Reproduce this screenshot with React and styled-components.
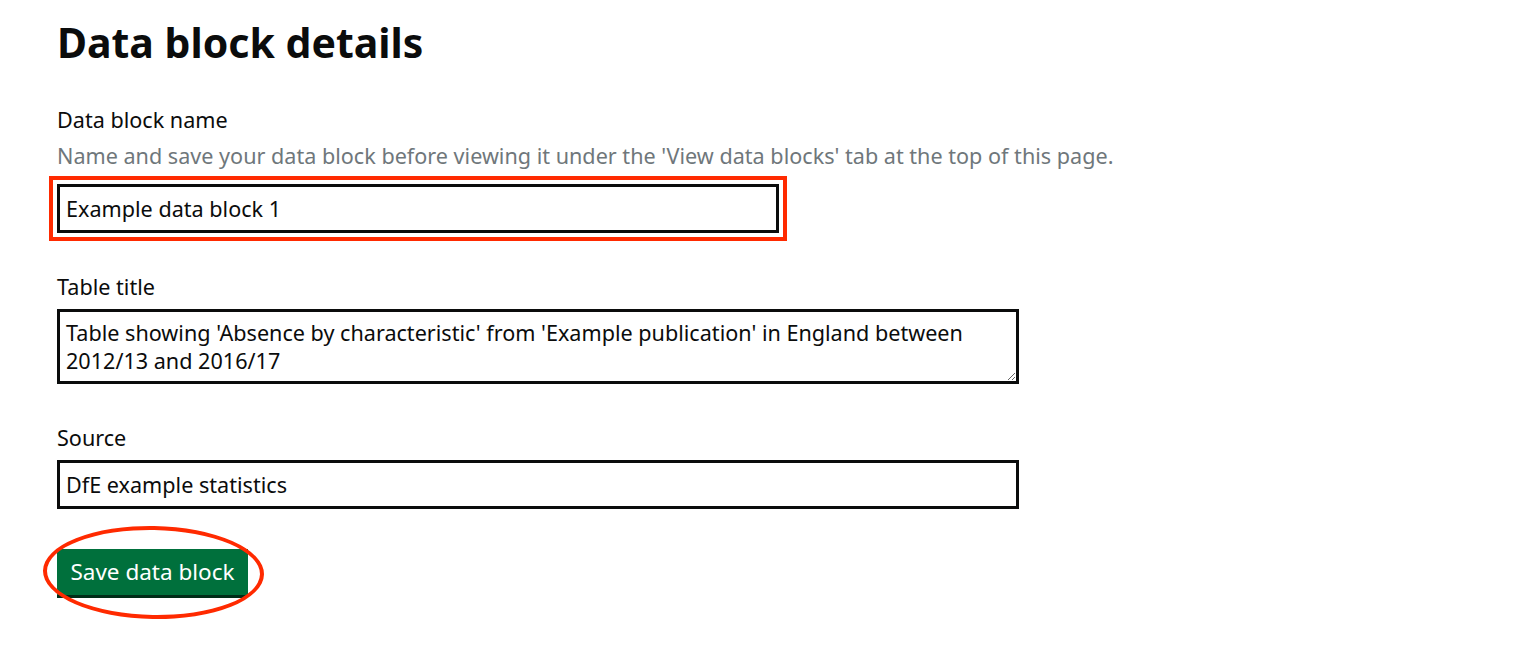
import React from "react";
import styled, { createGlobalStyle } from "styled-components";

const GlobalStyle = createGlobalStyle`
   * {
      box-sizing: border-box;
   }
   body {
      margin: 0;
      background: #ffffff;
      font-family: "Noto Sans", "Liberation Sans", sans-serif;
      color: #0b0c0c;
   }
`;

export default function App() {
   return (
      <>
         <GlobalStyle />
         <Page>
            <Heading>Data block details</Heading>

            <FormGroup>
               <Label htmlFor="name">Data block name</Label>
               <Hint>
                  Name and save your data block before viewing it under the 'View data blocks' tab at
                  the top of this page.
               </Hint>
               <Highlight>
                  <Input id="name" width="722px" defaultValue="Example data block 1" />
               </Highlight>
            </FormGroup>

            <FormGroup>
               <Label htmlFor="title">Table title</Label>
               <TextArea
                  id="title"
                  rows={2}
                  defaultValue="Table showing 'Absence by characteristic' from 'Example publication' in England between 2012/13 and 2016/17"
               />
            </FormGroup>

            <FormGroup>
               <Label htmlFor="source">Source</Label>
               <Input id="source" width="962px" defaultValue="DfE example statistics" />
            </FormGroup>

            <Circled>
               <Button type="button">Save data block</Button>
            </Circled>
         </Page>
      </>
   );
}

const Page = styled.main`
   min-height: 650px;
   padding: 18px 0 60px 57px;
`;

const Heading = styled.h1`
   margin: 0 0 40px;
   font-size: 41px;
   line-height: 48px;
   font-weight: 700;
`;

const FormGroup = styled.div`
   margin-bottom: 40px;
`;

const Label = styled.label`
   display: block;
   margin-bottom: 8px;
   font-size: 21.6px;
   line-height: 28px;
`;

const Hint = styled.div`
   margin-bottom: 14px;
   font-size: 21.6px;
   line-height: 28px;
   color: #6f777b;
`;

const Highlight = styled.div`
   display: inline-block;
   outline: 4.5px solid #ff2a00;
   outline-offset: 4px;
`;

const Input = styled.input`
   display: block;
   width: ${(p) => p.width};
   height: 49px;
   padding: 6px;
   border: 3px solid #0b0c0c;
   border-radius: 0;
   font-family: inherit;
   font-size: 21.6px;
   line-height: 28px;
   color: #0b0c0c;
   outline: none;
`;

const TextArea = styled.textarea`
   display: block;
   width: 962px;
   height: 75px;
   padding: 7px 6px 6px;
   border: 3px solid #0b0c0c;
   border-radius: 0;
   font-family: inherit;
   font-size: 21.6px;
   line-height: 28px;
   color: #0b0c0c;
   outline: none;
   resize: vertical;
`;

const Circled = styled.div`
   position: relative;
   display: inline-block;

   &::after {
      content: "";
      position: absolute;
      inset: -23px -16px -24px -14px;
      border: 4px solid #ff2a00;
      border-radius: 50%;
      transform: rotate(1deg);
      pointer-events: none;
   }
`;

const Button = styled.button`
   display: block;
   width: 191px;
   height: 46px;
   padding: 0;
   border: 0;
   border-radius: 0;
   background: #00703c;
   box-shadow: 0 3px 0 #002d18;
   font-family: inherit;
   font-size: 22.5px;
   line-height: 28px;
   color: #ffffff;
   cursor: pointer;
`;
